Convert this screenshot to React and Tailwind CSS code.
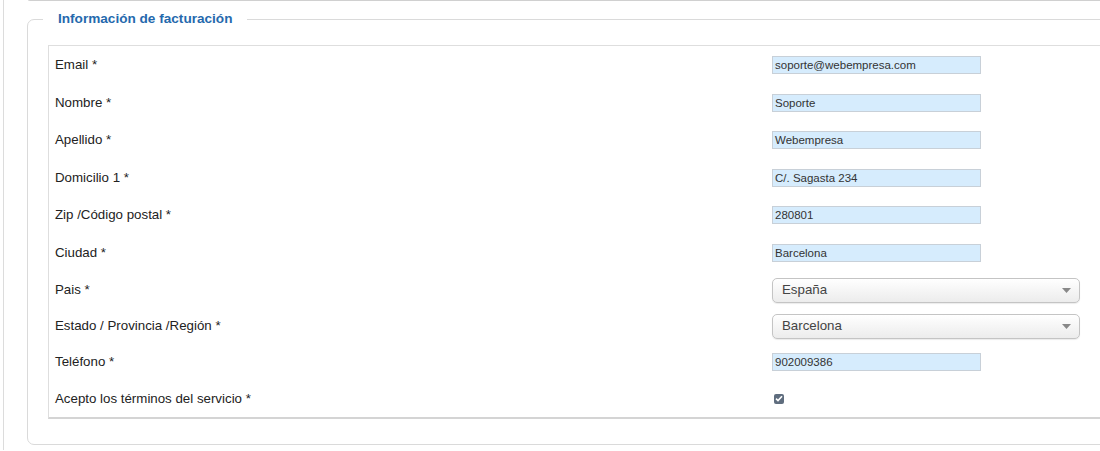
import React from "react";

const rows = [
  { label: "Email *", type: "text", value: "soporte@webempresa.com", h: "h-[38px]" },
  { label: "Nombre *", type: "text", value: "Soporte", h: "h-[37px]" },
  { label: "Apellido *", type: "text", value: "Webempresa", h: "h-[38px]" },
  { label: "Domicilio 1 *", type: "text", value: "C/. Sagasta 234", h: "h-[37px]" },
  { label: "Zip /Código postal *", type: "text", value: "280801", h: "h-[38px]" },
  { label: "Ciudad *", type: "text", value: "Barcelona", h: "h-[38px]" },
  { label: "Pais *", type: "select", value: "España", h: "h-[36px]" },
  { label: "Estado / Provincia /Región *", type: "select", value: "Barcelona", h: "h-[36px]" },
  { label: "Teléfono *", type: "text", value: "902009386", h: "h-[36px]" },
  { label: "Acepto los términos del servicio *", type: "check", h: "h-[37px]" },
];

function Field({ row }) {
  if (row.type === "select") {
    return (
      <div className="flex items-center justify-between w-[308px] h-[25px] rounded-[5px] border border-[#c4c4c4] bg-gradient-to-b from-white to-[#ececec] shadow-[0_1px_1px_rgba(0,0,0,0.08)] pl-[9px] pr-[8px] text-[13.3px] text-[#444]">
        <span>{row.value}</span>
        <svg width="9" height="5" viewBox="0 0 9 5">
          <path d="M0 0 L9 0 L4.5 5 Z" fill="#888" />
        </svg>
      </div>
    );
  }
  if (row.type === "check") {
    return (
      <div className="ml-[2px] w-[10px] h-[10px] rounded-[2px] bg-[#5f6d7e] flex items-center justify-center">
        <svg width="8" height="7" viewBox="0 0 8 7">
          <path d="M1 3.6 L3 5.6 L7 1.2" stroke="#fff" strokeWidth="1.6" fill="none" />
        </svg>
      </div>
    );
  }
  return (
    <div className="w-[209px] h-[18px] border border-[#c8d0d8] bg-[#d6ecfd] pl-[2px] text-[11.5px] leading-[16px] text-[#333]">
      {row.value}
    </div>
  );
}

export default function App() {
  return (
    <div className="w-[1100px] h-[451px] overflow-hidden bg-white font-['Liberation_Sans',Arial,sans-serif]">
      <div className="ml-[3px] h-full border-l border-[#dcdcdc]">
        {/* previous box bottom edge */}
        <div className="ml-[24px] h-[2px] -mt-[1px] border-b border-l border-[#d0d0d0] rounded-bl-[4px] w-[1200px]" />

        {/* fieldset */}
        <div className="relative ml-[23px] mt-[18px] w-[1200px] h-[426px] border border-[#dadada] rounded-[7px]">
          <div className="absolute -top-[10px] left-[15px] bg-white px-[15px] text-[13.6px] font-bold text-[#2569ad] leading-[18px]">
            Información de facturación
          </div>

          <div className="ml-[20px] mt-[25px] w-[1160px] border border-[#dedede] border-b-2 border-b-[#d4d4d4]">
            {rows.map((row) => (
              <div key={row.label} className={"flex items-center " + row.h}>
                <div className="w-[723px] pl-[6px] text-[13.3px] text-[#222]">{row.label}</div>
                <Field row={row} />
              </div>
            ))}
          </div>
        </div>
      </div>
    </div>
  );
}
